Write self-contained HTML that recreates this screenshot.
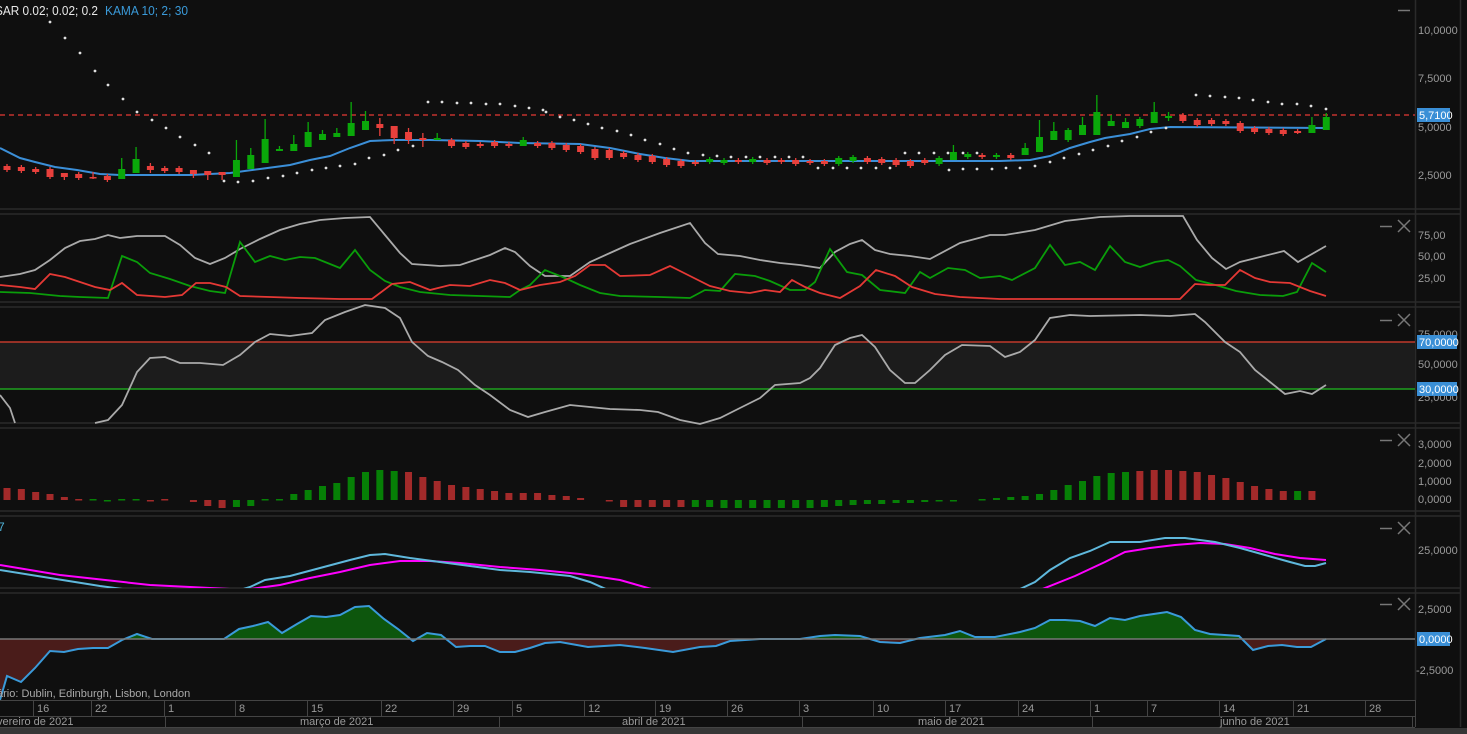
<!DOCTYPE html>
<html><head><meta charset="utf-8"><style>
html,body{margin:0;padding:0;background:#0f0f0f;width:1467px;height:734px;overflow:hidden}
svg{display:block}
text{font-family:"Liberation Sans",sans-serif}
.ax{fill:#9a9a9a;font-size:11px}
</style></head><body>
<svg id="s" width="1467" height="734" viewBox="0 0 1467 734" xmlns="http://www.w3.org/2000/svg">
<rect width="1467" height="734" fill="#0f0f0f"/>
<g stroke="#2a2a2a" stroke-width="1.5">
<line x1="0" y1="209" x2="1460" y2="209"/><line x1="0" y1="214" x2="1460" y2="214"/>
<line x1="0" y1="302" x2="1460" y2="302"/><line x1="0" y1="307" x2="1460" y2="307"/>
<line x1="0" y1="423" x2="1460" y2="423"/><line x1="0" y1="428" x2="1460" y2="428"/>
<line x1="0" y1="511" x2="1460" y2="511"/><line x1="0" y1="516" x2="1460" y2="516"/>
<line x1="0" y1="588" x2="1460" y2="588"/><line x1="0" y1="593" x2="1460" y2="593"/>
<line x1="1415.5" y1="0" x2="1415.5" y2="700"/>
<line x1="1460.5" y1="0" x2="1460.5" y2="727"/>
</g>
<text x="-5" y="15" fill="#e8e8e8" font-size="12.5" textLength="103" lengthAdjust="spacingAndGlyphs">SAR 0.02; 0.02; 0.2</text>
<text x="105" y="15" fill="#3a9ad9" font-size="12.5" textLength="83" lengthAdjust="spacingAndGlyphs">KAMA 10; 2; 30</text>
<line x1="1398" y1="10.5" x2="1410" y2="10.5" stroke="#777" stroke-width="1.5"/>
<g class="ax"><text x="1418" y="34">10,0000</text><text x="1418" y="82">7,5000</text><text x="1418" y="131">5,0000</text><text x="1418" y="179">2,5000</text></g>
<line x1="0" y1="115" x2="1415" y2="115" stroke="#e53935" stroke-width="1.2" stroke-dasharray="5,4"/>
<rect x="1417" y="108" width="33" height="14" fill="#3a8fd6"/><text x="1419" y="119" fill="#fff" font-size="11">5,7100</text>
<polyline fill="none" stroke="#3b8fd8" stroke-width="2" points="0,148 20,158 35,162 55,167 77,170 100,174 120,175 150,175 190,175 230,173 260,169 290,165 310,160 330,156 350,148 370,141 395,140 430,140 480,141 520,143 580,144 610,148 640,154 665,158 690,161 740,161 800,161 900,161 1000,161 1030,160 1050,156 1070,148 1090,142 1105,138 1130,134 1150,129 1170,127 1326,128"/>
<g id="sar" fill="#e0e0e0"></g>
<g id="candles"></g>
<line x1="1380" y1="226.5" x2="1392" y2="226.5" stroke="#777" stroke-width="1.5"/>
<path d="M1398 220 L1410 232 M1410 220 L1398 232" stroke="#777" stroke-width="1.5"/>
<g class="ax"><text x="1418" y="239">75,00</text><text x="1418" y="260">50,00</text><text x="1418" y="282">25,00</text></g>
<polyline fill="none" stroke="#aaa" stroke-width="1.8" points="0,277 20,274 35,270 50,260 65,248 80,241 95,239 108,235 120,238 137,236 165,236 180,245 195,258 210,264 225,258 240,249 260,239 280,230 300,224 320,220 345,218 370,217 385,235 400,253 412,264 440,266 460,265 475,260 490,255 505,248 515,252 530,266 545,276 570,276 590,262 610,253 630,244 660,233 690,223 705,243 718,254 740,256 760,260 780,263 800,265 820,268 835,252 850,244 862,240 875,250 890,254 910,256 930,259 960,243 990,235 1005,235 1035,230 1065,221 1100,217 1130,216 1183,216 1197,240 1212,258 1226,269 1240,262 1260,257 1284,251 1298,262 1326,246"/>
<polyline fill="none" stroke="#0a9d0a" stroke-width="1.8" points="0,292 30,293 60,296 80,297 108,298 122,256 137,262 150,273 170,279 190,286 210,291 225,293 240,242 255,262 270,256 285,260 300,257 315,258 325,262 340,268 355,250 370,270 385,281 400,287 420,292 450,295 480,296 510,297 520,290 530,285 545,270 565,278 580,285 600,293 620,296 660,297 690,298 705,290 720,291 735,274 755,276 770,281 790,290 805,290 815,282 830,249 847,272 862,275 880,290 905,293 920,272 930,278 948,268 965,270 980,278 1000,276 1012,280 1035,268 1050,245 1065,265 1080,262 1095,270 1110,246 1125,262 1140,267 1155,262 1168,260 1180,266 1196,280 1212,284 1236,291 1260,295 1283,296 1297,292 1312,263 1326,272"/>
<polyline fill="none" stroke="#e53935" stroke-width="1.8" points="0,285 20,287 35,289 50,274 65,277 80,282 95,287 110,290 122,283 137,295 165,297 182,295 196,283 210,283 226,287 240,296 270,297 300,298 340,299 372,299 392,284 410,282 430,290 450,285 470,286 490,280 505,283 520,290 540,285 560,282 575,276 590,265 605,265 620,276 650,275 670,266 690,276 710,286 730,291 750,293 765,290 780,292 792,280 805,287 820,293 840,298 860,286 876,270 895,276 912,287 935,294 960,297 1000,299 1100,299 1180,299 1195,284 1210,285 1225,285 1240,270 1255,278 1270,282 1290,283 1310,291 1326,296"/>
<line x1="1380" y1="320.5" x2="1392" y2="320.5" stroke="#777" stroke-width="1.5"/>
<path d="M1398 314 L1410 326 M1410 314 L1398 326" stroke="#777" stroke-width="1.5"/>
<rect x="0" y="342" width="1415" height="47" fill="#1c1c1c"/>
<line x1="0" y1="342" x2="1415" y2="342" stroke="#c0392b" stroke-width="1.5"/>
<line x1="0" y1="389" x2="1415" y2="389" stroke="#1ea01e" stroke-width="1.5"/>
<g class="ax"><text x="1418" y="338">75,0000</text><text x="1418" y="368">50,0000</text><text x="1418" y="401">25,0000</text></g>
<rect x="1417" y="335" width="40" height="14" fill="#3a8fd6"/><text x="1419" y="346" fill="#fff" font-size="11">70,0000</text>
<rect x="1417" y="382" width="40" height="14" fill="#3a8fd6"/><text x="1419" y="393" fill="#fff" font-size="11">30,0000</text>
<polyline fill="none" stroke="#aaa" stroke-width="1.8" points="0,395 10,408 15,423"/>
<polyline fill="none" stroke="#aaa" stroke-width="1.8" points="95,423 108,420 122,405 137,372 150,358 165,357 180,363 200,363 223,365 240,355 255,342 270,334 290,336 312,333 325,320 345,312 365,305 385,308 400,318 412,342 428,356 442,362 458,370 475,385 490,395 510,410 528,417 545,412 570,405 590,407 610,409 640,410 658,412 680,420 700,424 720,418 740,408 760,398 775,385 800,383 810,378 820,368 835,345 850,338 862,335 875,347 890,370 905,383 915,383 930,370 945,355 962,345 990,346 1005,357 1020,352 1035,340 1050,318 1070,315 1090,316 1140,315 1170,316 1195,314 1205,322 1225,342 1240,352 1255,370 1270,382 1285,394 1300,391 1312,394 1326,385"/>
<line x1="1380" y1="440.5" x2="1392" y2="440.5" stroke="#777" stroke-width="1.5"/>
<path d="M1398 434 L1410 446 M1410 434 L1398 446" stroke="#777" stroke-width="1.5"/>
<g class="ax"><text x="1418" y="448">3,0000</text><text x="1418" y="467">2,0000</text><text x="1418" y="485">1,0000</text><text x="1418" y="503">0,0000</text></g>
<g id="hist"></g>
<text x="-2" y="531" fill="#4fb3d9" font-size="12">7</text>
<line x1="1380" y1="528.5" x2="1392" y2="528.5" stroke="#777" stroke-width="1.5"/>
<path d="M1398 522 L1410 534 M1410 522 L1398 534" stroke="#777" stroke-width="1.5"/>
<text class="ax" x="1418" y="554">25,0000</text>
<clipPath id="c5"><rect x="0" y="517" width="1415" height="71"/></clipPath>
<g clip-path="url(#c5)" fill="none" stroke-width="2">
<polyline stroke="#ff00ff" points="0,565 60,575 150,585 230,589 250,589 280,585 310,578 340,572 370,565 400,561 430,561 460,563 500,567 540,570 580,574 620,580 655,590"/>
<polyline stroke="#ff00ff" points="1040,590 1075,576 1105,562 1125,552 1150,548 1175,545 1200,543 1225,544 1250,548 1275,554 1300,558 1326,560"/>
<polyline stroke="#5fb8dc" points="0,570 50,578 100,586 130,590 240,590 250,587 265,580 290,576 320,568 350,560 370,555 385,554 410,558 440,562 470,566 500,570 530,572 570,576 590,582 608,590"/>
<polyline stroke="#5fb8dc" points="1018,590 1035,582 1050,570 1070,558 1090,551 1110,542 1140,542 1165,538 1185,538 1215,542 1240,548 1265,555 1290,562 1305,566 1315,566 1326,563"/>
</g>
<line x1="1380" y1="604.5" x2="1392" y2="604.5" stroke="#777" stroke-width="1.5"/>
<path d="M1398 598 L1410 610 M1410 598 L1398 610" stroke="#777" stroke-width="1.5"/>
<g class="ax"><text x="1418" y="613">2,5000</text><text x="1416" y="674">-2,5000</text></g>
<clipPath id="up"><rect x="0" y="594" width="1415" height="45"/></clipPath>
<clipPath id="dn"><rect x="0" y="639" width="1415" height="61"/></clipPath>
<g id="p6"></g>
<line x1="0" y1="639" x2="1415" y2="639" stroke="#777" stroke-width="1.5"/>
<rect x="1417" y="632" width="33" height="14" fill="#3a8fd6"/><text x="1419" y="643" fill="#fff" font-size="11">0,0000</text>
<text x="-3" y="697" fill="#aaa" font-size="11">ário: Dublin, Edinburgh, Lisbon, London</text>
<g stroke="#444" stroke-width="1">
<line x1="0" y1="700.5" x2="1415" y2="700.5"/><line x1="0" y1="716.5" x2="1415" y2="716.5"/><line x1="0" y1="727.5" x2="1415" y2="727.5"/>
<line x1="1415.5" y1="700" x2="1415.5" y2="727"/>
<line x1="1412.5" y1="716" x2="1412.5" y2="727"/>
</g>
<g id="tax" class="ax"></g>
<g class="ax" font-size="11">
<text x="-3" y="725">vereiro de 2021</text>
<text x="300" y="725">março de 2021</text>
<text x="622" y="725">abril de 2021</text>
<text x="918" y="725">maio de 2021</text>
<text x="1220" y="725">junho de 2021</text>
</g>
<g stroke="#444"><line x1="165.5" y1="716" x2="165.5" y2="727"/><line x1="499.5" y1="716" x2="499.5" y2="727"/><line x1="802.5" y1="716" x2="802.5" y2="727"/><line x1="1092.5" y1="716" x2="1092.5" y2="727"/></g>
<rect x="0" y="728" width="1467" height="6" fill="#363636"/>
</svg>
<script>
var NS="http://www.w3.org/2000/svg";
function el(p,t,a){var e=document.createElementNS(NS,t);for(var k in a)e.setAttribute(k,a[k]);p.appendChild(e);return e;}
function X(i){return 7+i*14.34;}
var C="166,170,r;167,171,r;169,172,r;169,177,r;173,177,r,173,180;174,178,r;177,178,r,172,179;176,180,r;169,179,g,158,179;159,173,g,147,173;166,170,r,163,173;168,171,r;168,172,r;170,174,r,170,178;171,175,r,171,180;172,175,r,172,180;160,177,g,140,177;155,169,g,148,169;139,163,g,119,163;149,151,g,146,151;144,151,g,135,151;132,147,g,122,147;134,140,g,130,140;133,137,g,128,137;123,136,g,102,136;121,130,g,111,130;124,128,r,118,136;126,138,r,126,144;132,140,r,128,144;138,140,r,133,147;138,140,g,133,140;140,146,r;143,147,r;144,146,r;142,146,r;144,146,r;140,146,g,137,146;143,146,r;143,148,r;145,150,r;146,152,r;149,158,r;150,158,r;153,157,r;155,160,r;156,162,r;159,165,r;161,166,r;162,164,r;159,162,g;160,163,g;160,162,r;159,162,g;160,163,r;160,162,r;160,164,r;161,163,r;161,164,r;158,164,g;157,161,g;158,162,r;159,163,r;160,165,r;161,166,r;160,163,r;158,164,g;152,160,g,145,160;154,157,g;155,157,r;155,157,g;155,158,r;148,155,g,143,155;137,152,g,120,152;131,140,g,122,140;130,140,g;125,135,g,117,135;112,135,g,95,135;121,126,g,115,126;122,128,g,118,128;119,126,g;112,123,g,102,123;116,118,g,112,121;115,121,r;120,125,r;120,124,r;121,124,r;123,131,r;128,132,r;129,133,r;130,134,r;131,133,r,129,134;125,133,g,117,133;117,130,g,113,130".split(";");
var cg=document.getElementById("candles");
C.forEach(function(s,i){var a=s.split(","),t=+a[0],b=+a[1],col=a[2]=="g"?"#0aa80a":"#e8403c";var x=X(i);
var wt=a[3]?+a[3]:t-2,wb=a[4]?+a[4]:b+2;
el(cg,"line",{x1:x,y1:wt,x2:x,y2:wb,stroke:col,"stroke-width":1.3});
el(cg,"rect",{x:x-3.5,y:t,width:7,height:Math.max(b-t,1.5),fill:col});});
var S=[[50,22],[65,38],[80,53],[95,71],[108,85],[123,99],[137,112],[152,120],[166,128],[180,137],[195,145],[209,153],[224,181],[238,182],[253,181],[268,178],[283,176],[297,173],[312,170],[326,168],[340,166],[355,164],[369,158],[384,155],[398,150],[413,146],[428,102],[442,102],[457,103],[471,103],[486,104],[500,104],[515,106],[529,108],[543,110],[546,112],[560,117],[574,120],[588,124],[602,128],[617,131],[631,135],[645,140],[660,144],[674,149],[688,153],[703,155],[717,156],[731,157],[746,157],[760,157],[775,157],[789,157],[803,157],[818,168],[833,168],[847,168],[861,168],[876,168],[890,168],[905,153],[919,153],[934,153],[948,153],[963,153],[977,153],[949,170],[963,169],[977,169],[992,169],[1006,168],[1020,168],[1035,166],[1050,162],[1064,158],[1079,154],[1093,150],[1108,146],[1122,141],[1137,137],[1151,132],[1166,128],[1196,95],[1210,96],[1225,97],[1239,98],[1253,100],[1268,102],[1282,104],[1297,104],[1311,106],[1326,109]];
var sg=document.getElementById("sar");S.forEach(function(p){el(sg,"circle",{cx:p[0],cy:p[1],r:1.4});});
var H=[12,11,8,6,3,1,1,-1,1,1,-1,1,0,-2,-6,-8,-7,-6,1,1,6,10,14,17,23,28,30,29,28,23,19,15,13,11,9,7,7,7,5,4,2,0,-1,-7,-7,-7,-7,-7,-7,-7,-8,-8,-8,-8,-8,-8,-8,-7,-6,-5,-4,-4,-3,-3,-2,-1,-1,0,1,2,3,4,6,10,15,19,24,27,28,29,30,30,29,28,25,22,18,14,11,9,9,9];
var HC="rrrrrrggggrrrrrrggggggggggggrrrrrrrrrrrrrrrrrrrrgggggggggggggggggggggggggggggggrrrrrrrrrrrg";
var hg=document.getElementById("hist");
H.forEach(function(h,i){if(h==0)return;var x=X(i);var col=HC[i]=="g"?"#068006":"#a32a2a";
var y=h>0?500-h:500;el(hg,"rect",{x:x-3.5,y:y,width:7,height:Math.max(Math.abs(h),1.5),fill:col});});
var P="0,700 7,676 21,682 35,668 50,651 64,652 78,649 93,648 108,648 122,640 137,634 152,639 166,639 195,639 224,639 239,629 253,626 268,622 282,633 297,624 311,616 326,617 340,615 355,607 369,606 384,619 398,629 413,641 427,633 441,635 456,647 470,646 485,646 500,652 515,652 530,648 545,643 560,642 588,647 620,645 645,648 673,652 700,647 716,646 730,641 760,639 800,639 820,636 835,635 860,636 880,642 900,643 920,638 945,635 960,631 975,637 995,637 1020,632 1035,628 1050,620 1065,620 1080,621 1095,626 1110,618 1125,620 1140,616 1167,612 1181,617 1195,630 1210,634 1239,636 1253,650 1268,646 1282,645 1297,647 1311,647 1326,639";
var g6=document.getElementById("p6");
el(g6,"polygon",{points:P+" 1326,639 0,639",fill:"#0d560d","clip-path":"url(#up)"});
el(g6,"polygon",{points:P+" 1326,639 0,639",fill:"#4a1c1a","clip-path":"url(#dn)"});
el(g6,"polyline",{points:P,fill:"none",stroke:"#3a9ad9","stroke-width":2});
var T=[["16",37],["22",95],["1",168],["8",239],["15",311],["22",385],["29",457],["5",516],["12",588],["19",659],["26",731],["3",803],["10",877],["17",949],["24",1022],["1",1094],["7",1151],["14",1223],["21",1297],["28",1369]];
var tg=document.getElementById("tax");
T.forEach(function(t){el(tg,"line",{x1:t[1]-3.5,y1:700,x2:t[1]-3.5,y2:716,stroke:"#444"});var e=el(tg,"text",{x:t[1],y:712});e.textContent=t[0];});
</script>
</body></html>
